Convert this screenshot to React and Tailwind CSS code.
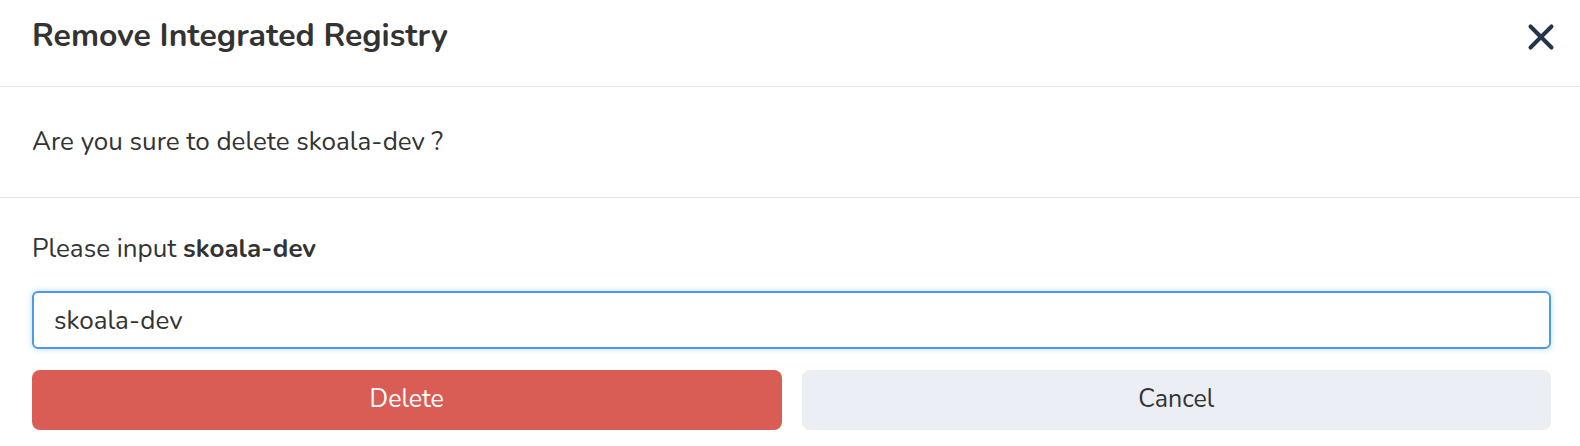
import { X } from 'lucide-react';

export default function App() {
  return (
    <div className="w-[1580px] h-[446px] bg-white text-[#333333] font-['Nunito','Lato',sans-serif] flex flex-col">
      {/* Header */}
      <div className="h-[87px] shrink-0 flex items-start justify-between pt-4 pl-8 pr-[18px] border-b border-[#e4e4ea]">
        <h1 className="mt-1 text-[32px] font-bold leading-none">Remove Integrated Registry</h1>
        <button className="text-[#24344a]">
          <X size={42} strokeWidth={2.3} />
        </button>
      </div>

      {/* Message */}
      <div className="h-[111px] shrink-0 flex items-center pl-8 border-b border-[#e4e4ea]">
        <p className="text-[26px] leading-none">Are you sure to delete skoala-dev ?</p>
      </div>

      {/* Confirm form */}
      <div className="flex flex-col pl-8 pr-[29px] pt-[35px]">
        <p className="text-[26px] leading-[32px]">
          Please input <span className="font-bold">skoala-dev</span>
        </p>
        <input
          defaultValue="skoala-dev"
          className="mt-[26px] h-[58px] w-full rounded-[6px] border-2 border-[#4a9be6] px-5 text-[26px] text-[#333333] outline-none shadow-[0_0_6px_rgba(74,155,230,0.35)]"
        />
        <div className="mt-[21px] grid grid-cols-2 gap-5">
          <button className="h-[60px] rounded-[8px] bg-[#d95c55] text-white text-[25px]">Delete</button>
          <button className="h-[60px] rounded-[8px] bg-[#eceef5] text-[#333333] text-[25px]">Cancel</button>
        </div>
      </div>
    </div>
  );
}
